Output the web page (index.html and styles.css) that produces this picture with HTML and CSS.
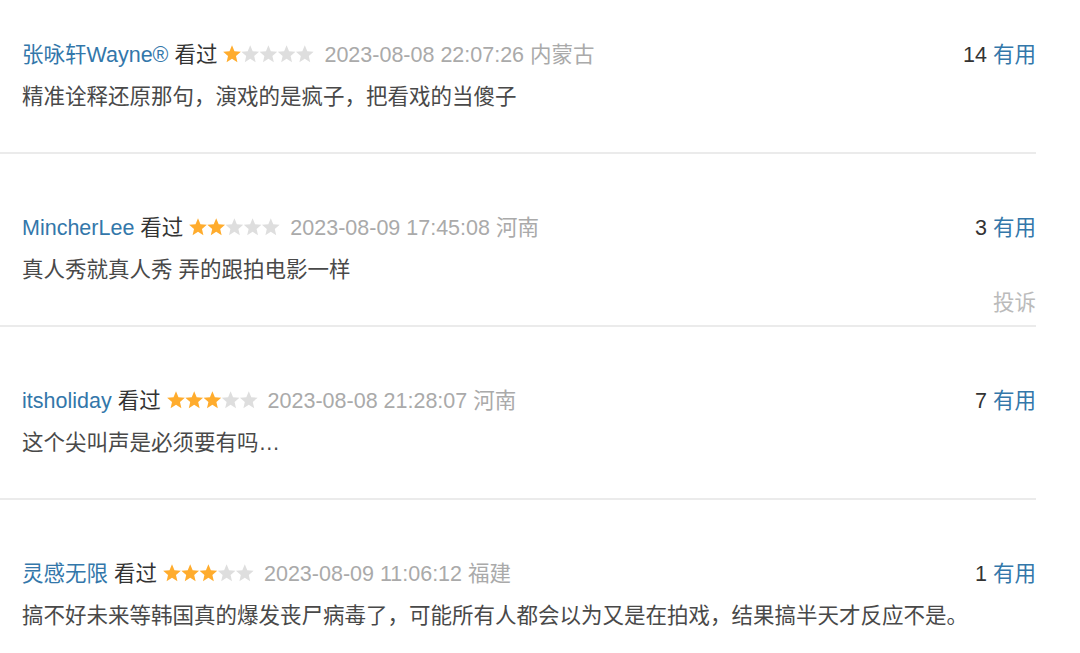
FILE: index.html
```html
<!DOCTYPE html>
<html lang="zh-CN">
<head>
<meta charset="utf-8">
<title>短评</title>
<link rel="stylesheet" href="styles.css">
</head>
<body>
<svg class="defs" width="0" height="0" aria-hidden="true">
  <defs>
    <polygon id="star" points="9,0.3 11.47,6.2 17.85,6.76 12.99,10.9 14.41,17.3 9,13.8 3.59,17.3 5.01,10.9 0.15,6.76 6.53,6.2"/>
  </defs>
</svg>
<div class="comments">
  <div class="item">
    <div class="head">
      <div class="info"><a class="name">张咏轩Wayne®</a> <span class="seen">看过</span> <svg class="stars" viewBox="0 0 91 18"><use href="#star" x="0" class="on"/><use href="#star" x="18.2" class="off"/><use href="#star" x="36.4" class="off"/><use href="#star" x="54.6" class="off"/><use href="#star" x="72.8" class="off"/></svg> <span class="time">2023-08-08 22:07:26</span> <span class="loc">内蒙古</span></div>
      <div class="votes"><span class="count">14</span> <a class="useful">有用</a></div>
    </div>
    <p class="content">精准诠释还原那句，演戏的是疯子，把看戏的当傻子</p>
    <div class="foot"><a class="report hidden">投诉</a></div>
  </div>
  <div class="item">
    <div class="head">
      <div class="info"><a class="name">MincherLee</a> <span class="seen">看过</span> <svg class="stars" viewBox="0 0 91 18"><use href="#star" x="0" class="on"/><use href="#star" x="18.2" class="on"/><use href="#star" x="36.4" class="off"/><use href="#star" x="54.6" class="off"/><use href="#star" x="72.8" class="off"/></svg> <span class="time">2023-08-09 17:45:08</span> <span class="loc">河南</span></div>
      <div class="votes"><span class="count">3</span> <a class="useful">有用</a></div>
    </div>
    <p class="content">真人秀就真人秀 弄的跟拍电影一样</p>
    <div class="foot"><a class="report">投诉</a></div>
  </div>
  <div class="item">
    <div class="head">
      <div class="info"><a class="name">itsholiday</a> <span class="seen">看过</span> <svg class="stars" viewBox="0 0 91 18"><use href="#star" x="0" class="on"/><use href="#star" x="18.2" class="on"/><use href="#star" x="36.4" class="on"/><use href="#star" x="54.6" class="off"/><use href="#star" x="72.8" class="off"/></svg> <span class="time">2023-08-08 21:28:07</span> <span class="loc">河南</span></div>
      <div class="votes"><span class="count">7</span> <a class="useful">有用</a></div>
    </div>
    <p class="content">这个尖叫声是必须要有吗…</p>
    <div class="foot"><a class="report hidden">投诉</a></div>
  </div>
  <div class="item">
    <div class="head">
      <div class="info"><a class="name">灵感无限</a> <span class="seen">看过</span> <svg class="stars" viewBox="0 0 91 18"><use href="#star" x="0" class="on"/><use href="#star" x="18.2" class="on"/><use href="#star" x="36.4" class="on"/><use href="#star" x="54.6" class="off"/><use href="#star" x="72.8" class="off"/></svg> <span class="time">2023-08-09 11:06:12</span> <span class="loc">福建</span></div>
      <div class="votes"><span class="count">1</span> <a class="useful">有用</a></div>
    </div>
    <p class="content">搞不好未来等韩国真的爆发丧尸病毒了，可能所有人都会以为又是在拍戏，结果搞半天才反应不是。</p>
    <div class="foot"><a class="report hidden">投诉</a></div>
  </div>
</div>
</body>
</html>
```
FILE: styles.css
```css
html, body {
  margin: 0;
  padding: 0;
  background: #fff;
}
body {
  font-family: "Liberation Sans", Arial, "Noto Sans CJK SC", sans-serif;
  font-size: 21.5px;
  color: #494949;
  overflow: hidden;
}
.defs {
  position: absolute;
  width: 0;
  height: 0;
}
.comments {
  width: 1036px;
  margin-top: -19px;
}
.item {
  padding: 59px 0 7px 22px;
  border-bottom: 2px solid #ebebeb;
}
.head {
  display: flex;
  justify-content: space-between;
  align-items: center;
  line-height: 30px;
  height: 30px;
}
.info {
  white-space: nowrap;
}
.name {
  color: #3377aa;
  text-decoration: none;
}
.seen {
  color: #333;
}
.stars {
  width: 91px;
  height: 18px;
  vertical-align: -1px;
  margin-right: 4px;
}
.stars .on {
  fill: #ffac2d;
}
.stars .off {
  fill: #dedede;
}
.time, .loc {
  color: #aaa;
}
.votes {
  white-space: nowrap;
}
.count {
  color: #333;
}
.useful {
  color: #3377aa;
}
.content {
  margin: 12px 0 0;
  line-height: 30px;
  color: #494949;
}
.foot {
  display: flex;
  justify-content: flex-end;
  margin-top: 3px;
  line-height: 30px;
  height: 30px;
}
.report {
  color: #bbb;
}
.report.hidden {
  visibility: hidden;
}
```
